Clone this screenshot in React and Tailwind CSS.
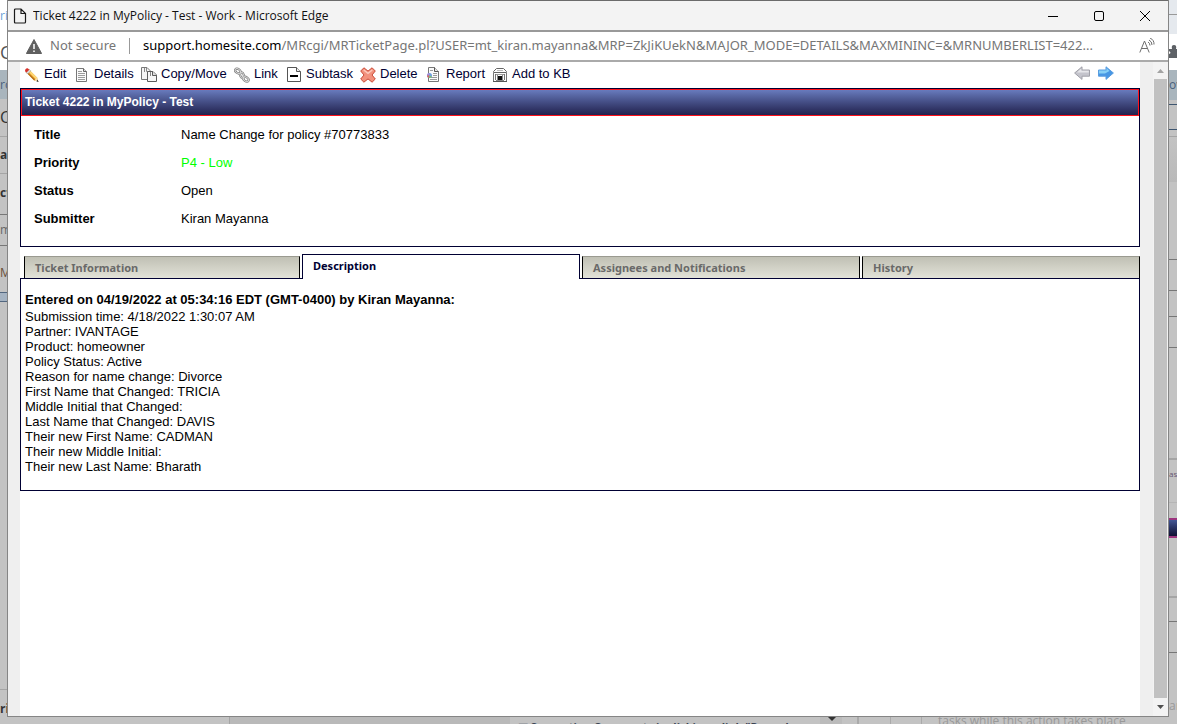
import { useState } from "react";

function PencilIcon() {
  return (
    <svg viewBox="0 0 16 16" className="size-4 shrink-0" aria-hidden="true">
      <path d="M4.5 2 13 10.5 14.3 14.6 10.2 13.4 1.8 5z" fill="#e8a332" />
      <path d="M5.6 3.2 13.2 10.8 12 12.2 4.2 4.6z" fill="#ffd978" />
      <path d="M2.6 5.8 10.2 13.4 11 12.6 3.4 5z" fill="#b26a17" />
      <path d="M3.8 3.8 5.3 2.3 6.8 3.8 3.6 7 2.1 5.5z" fill="#ddd" stroke="#888" strokeWidth=".4" />
      <path d="M1.2 4.4C.4 3 2.6.6 4 1.6l1.2 1.1-2.8 2.9z" fill="#d8322c" />
      <path d="M13 10.5 14.3 14.6 10.2 13.4z" fill="#f5dcae" />
      <path d="M13.6 12.8 14.6 14.9 12.4 14.2z" fill="#222" />
    </svg>
  );
}

function DetailsIcon() {
  return (
    <svg viewBox="0 0 16 16" className="size-4 shrink-0" aria-hidden="true">
      <path d="M2.5 1.5H9.5L12.5 4.5V14.5H2.5z" fill="#fafafa" stroke="#777" />
      <path d="M9.5 1.5V4.5H12.5" fill="#ddd" stroke="#666" />
      <path d="M4 4.5H8M4 6.5H11M4 8.5H11M4 10.5H11M4 12.5H11" stroke="#9c9c9c" />
    </svg>
  );
}

function CopyIcon() {
  return (
    <svg viewBox="0 0 16 16" className="size-4 shrink-0" aria-hidden="true">
      <path d="M.5.5H6L9.5 4V12.5H.5z" fill="#f4f4f4" stroke="#777" />
      <path d="M5.5.5V4.5H9.5M3.5 1V5" fill="none" stroke="#888" />
      <path d="M6.5 4.5H12L15.5 8V14.5H6.5z" fill="#f6f6f6" stroke="#5c5c5c" />
      <path d="M11.5 4.5V8.5H15.5" fill="#ddd" stroke="#5c5c5c" />
      <path d="M9.5 5V9" stroke="#888" />
    </svg>
  );
}

function LinkIcon() {
  return (
    <svg viewBox="0 0 16 16" className="size-4 shrink-0" fill="none" aria-hidden="true">
      <g stroke="#777" strokeWidth="2.2">
        <ellipse cx="3.8" cy="4" rx="2.9" ry="2" transform="rotate(35 3.8 4)" />
        <ellipse cx="8" cy="8.2" rx="2.9" ry="1.8" transform="rotate(70 8 8.2)" />
        <ellipse cx="12" cy="12.2" rx="2.9" ry="2" transform="rotate(35 12 12.2)" />
      </g>
      <g stroke="#d8d8d8">
        <ellipse cx="3.8" cy="4" rx="2.9" ry="2" transform="rotate(35 3.8 4)" />
        <ellipse cx="8" cy="8.2" rx="2.9" ry="1.8" transform="rotate(70 8 8.2)" />
        <ellipse cx="12" cy="12.2" rx="2.9" ry="2" transform="rotate(35 12 12.2)" />
      </g>
    </svg>
  );
}

function SubtaskIcon() {
  return (
    <svg viewBox="0 0 16 16" className="size-4 shrink-0" aria-hidden="true">
      <path d="M1.5.5H10.5L14.5 4.5V14.5H1.5z" fill="#fff" stroke="#555" />
      <path d="M10.5.5V4.5H14.5" fill="#eee" stroke="#555" />
      <path d="M4 9H12" stroke="#000" strokeWidth="2" />
    </svg>
  );
}

function DeleteIcon() {
  return (
    <svg viewBox="0 0 16 16" className="size-4 shrink-0" aria-hidden="true">
      <path
        d="M3.9.8 8 4.100 12.100.8 15.300 4 12 8 15.300 12 12.100 15.200 8 11.900 3.900 15.200.7 12 4 8 .7 4z"
        fill="#f2917d"
        stroke="#c94a37"
        strokeLinejoin="round"
      />
      <path d="M3.7 3 8 6.4 12.3 3" fill="none" stroke="#fcc9bd" strokeWidth="1.5" />
    </svg>
  );
}

function ReportIcon() {
  return (
    <svg viewBox="0 0 16 16" className="size-4 shrink-0" aria-hidden="true">
      <path d="M2.5.5H8.5L12.5 4.5V14.5H2.5z" fill="#fafafa" stroke="#777" />
      <path d="M8.5.5V4.5H12.5" fill="#e4e4e4" stroke="#555" />
      <path d="M4 3.5H7M7 6.5H11M7 8.5H11M5 10.5H11M4 12.5H11" stroke="#999" />
      <circle cx="3.5" cy="8.5" r="2.5" fill="#6f9fe0" />
      <path d="M3.5 8.5V6A2.5 2.5 0 0 0 1 8.5z" fill="#a98ad8" />
      <path d="M3.5 8.5H1A2.5 2.5 0 0 0 2.8 10.9z" fill="#e0655c" />
      <path d="M3.5 8.5 2.8 10.9A2.5 2.5 0 0 0 5.8 9.5z" fill="#7cc06c" />
    </svg>
  );
}

function KbIcon() {
  return (
    <svg viewBox="0 0 16 16" className="size-4 shrink-0" aria-hidden="true">
      <path d="M1.5 4.5 4.5 1.5H11.5L14.5 4.5V5.5H1.5z" fill="#fff" stroke="#666" />
      <path d="M5 3.5H11" stroke="#bbb" />
      <path d="M1.5 6V14M3.5 7V13M12.5 7V13M14.5 6V14" stroke="#777" />
      <path d="M4 7.5H12" stroke="#999" />
      <path d="M6 9H10V13H6z" fill="#111" />
      <path d="M5.500 8V13M10.500 8V13M4 13.5H12" stroke="#888" />
      <path d="M1 14.5H15" stroke="#555" />
    </svg>
  );
}

function ArrowIcon({ forward }) {
  return forward ? (
    <svg viewBox="0 0 16 14" className="h-[14px] w-4" aria-hidden="true">
      <path d="M.5 4H8V.8L15.4 7 8 13.4V10.2H.5z" fill="#4796e4" stroke="#5a9de0" strokeLinejoin="round" />
      <path d="M1 4.5H8.5V2L11.5 5 7 7.5H1z" fill="#86cff6" />
    </svg>
  ) : (
    <svg viewBox="0 0 16 14" className="h-[14px] w-4" aria-hidden="true">
      <path d="M15.5 4H8V.8L.6 7 8 13.4V10.2H15.5z" fill="#c4c4cc" stroke="#a0a0a8" strokeLinejoin="round" />
      <path d="M14.8 4.8H7.3V2.6L3 6.6H14.8z" fill="#e6e6ea" />
    </svg>
  );
}

const actions = [
  { label: "Edit", Icon: PencilIcon, width: "w-[50px]" },
  { label: "Details", Icon: DetailsIcon, width: "w-[67px]" },
  { label: "Copy/Move", Icon: CopyIcon, width: "w-[93px]" },
  { label: "Link", Icon: LinkIcon, width: "w-[52px]" },
  { label: "Subtask", Icon: SubtaskIcon, width: "w-[74px]" },
  { label: "Delete", Icon: DeleteIcon, width: "w-[66px]" },
  { label: "Report", Icon: ReportIcon, width: "w-[66px]" },
  { label: "Add to KB", Icon: KbIcon, width: "w-[90px]" },
];

const fields = [
  ["Title", "Name Change for policy #70773833", "text-black"],
  ["Priority", "P4 - Low", "text-[#00ff00]"],
  ["Status", "Open", "text-black"],
  ["Submitter", "Kiran Mayanna", "text-black"],
];

const tabs = ["Ticket Information", "Description", "Assignees and Notifications", "History"];

const lines = [
  "Submission time: 4/18/2022 1:30:07 AM",
  "Partner: IVANTAGE",
  "Product: homeowner",
  "Policy Status: Active",
  "Reason for name change: Divorce",
  "First Name that Changed: TRICIA",
  "Middle Initial that Changed:",
  "Last Name that Changed: DAVIS",
  "Their new First Name: CADMAN",
  "Their new Middle Initial:",
  "Their new Last Name: Bharath",
];

function TitleBar() {
  return (
    <header className="flex h-[32px] items-center border-t border-b-2 border-t-[#6b6b6b] border-b-[#999] bg-[#f3f3f3] pl-1">
      <svg viewBox="0 0 16 16" className="size-4" fill="none" stroke="#1a1a1a" strokeWidth="1.2" aria-hidden="true">
        <path d="M3.5 1H9L13.5 5.5V14Q13.5 15 12.5 15H3.5Q2.5 15 2.5 14V2Q2.5 1 3.5 1zM9 1V5.5H13.5" />
      </svg>
      <h1 className="ml-[5px] flex-1 truncate font-['Open_Sans',sans-serif] text-[12px] text-[#111]">
        Ticket 4222 in MyPolicy - Test - Work - Microsoft Edge
      </h1>
      <div className="flex">
        <button aria-label="Minimize" className="flex h-7 w-[46px] items-center justify-center">
          <svg viewBox="0 0 10 10" className="size-[10px]" stroke="#000" aria-hidden="true"><path d="M0 5.5H10" /></svg>
        </button>
        <button aria-label="Maximize" className="flex h-7 w-[46px] items-center justify-center">
          <svg viewBox="0 0 10 10" className="size-[10px]" fill="none" stroke="#000" aria-hidden="true"><rect x=".5" y=".5" width="9" height="9" rx="1.5" /></svg>
        </button>
        <button aria-label="Close" className="flex h-7 w-[46px] items-center justify-center">
          <svg viewBox="0 0 10 10" className="size-[10px]" stroke="#000" aria-hidden="true"><path d="M0 0 10 10M10 0 0 10" /></svg>
        </button>
      </div>
    </header>
  );
}

function AddressBar() {
  return (
    <div className="flex h-[30px] items-center border-b-2 border-[#aaa] bg-white pl-[18px] font-['Noto_Sans',sans-serif] text-[13px] text-[#767676]">
      <svg viewBox="0 0 16 15" className="h-[15px] w-4 shrink-0" aria-hidden="true">
        <path d="M8 .5 15.6 14.5H.4z" fill="#5f5f5f" stroke="#5f5f5f" strokeLinejoin="round" />
        <path d="M8 5V10M8 11.5V13" stroke="#fff" strokeWidth="1.5" />
      </svg>
      <span className="ml-2 shrink-0">Not secure</span>
      <span className="mx-[13px] h-4 w-px shrink-0 bg-[#999]" />
      <span className="min-w-0 flex-1 truncate">
        <span className="text-black">support.homesite.com</span>
        /MRcgi/MRTicketPage.pl?USER=mt_kiran.mayanna&amp;MRP=ZkJiKUekN&amp;MAJOR_MODE=DETAILS&amp;MAXMININC=&amp;MRNUMBERLIST=422...
      </span>
      <button aria-label="Read aloud" className="mr-[13px] shrink-0">
        <svg viewBox="0 0 16 16" className="size-4" fill="none" stroke="#6e6e6e" aria-hidden="true">
          <path d="M.8 14.5 5.5 3 10.2 14.5M2.5 10.5H8.5M9 4Q11 5 11 7.5M10 2Q13 3.5 13 7M11 0Q15.3 2 15 6.5" />
        </svg>
      </button>
    </div>
  );
}

function Ticket() {
  const [active, setActive] = useState("Description");
  return (
    <main className="flex-1 bg-white font-['Liberation_Sans',Arial,sans-serif] text-[13px] leading-[15px] text-black">
      <nav className="flex h-[26px] items-center pl-1">
        {actions.map(({ label, Icon, width }) => (
          <a key={label} href="#" className={`${width} flex items-center gap-1 whitespace-nowrap text-[#000033]`}>
            <Icon />
            <span className="pb-1">{label}</span>
          </a>
        ))}
        <div className="ml-auto flex gap-2 pr-[26px] pb-1">
          <button aria-label="Previous ticket"><ArrowIcon /></button>
          <button aria-label="Next ticket"><ArrowIcon forward /></button>
        </div>
      </nav>
      <section className="border border-[#000033]">
        <h2 className="flex h-[27px] items-center border border-[#ff1018] bg-linear-to-b from-[#687bbd] to-[#22224e] pl-[3px] text-[12px] font-bold text-white">
          Ticket 4222 in MyPolicy - Test
        </h2>
        <dl className="pt-1 pb-[14px] pl-[13px]">
          {fields.map(([name, value, color]) => (
            <div key={name} className="flex h-7 items-center">
              <dt className="w-[147px] font-bold">{name}</dt>
              <dd className={color}>{value}</dd>
            </div>
          ))}
        </dl>
      </section>
      <div role="tablist" className="mt-[7px] -mb-px grid grid-cols-[276fr_278fr_278fr_278fr] items-end gap-x-[2px] pl-1 font-['Noto_Sans',sans-serif] text-[11px] font-bold">
        {tabs.map((tab) => (
          <button
            key={tab}
            role="tab"
            aria-selected={active === tab}
            onClick={() => setActive(tab)}
            className={
              active === tab
                ? "flex h-[25px] items-center border border-b-0 border-[#000033] bg-white pb-[3px] pl-[10px] text-[#000033]"
                : "mb-px flex h-[22px] items-center border-x border-t border-x-black border-t-[#9a9a90] bg-linear-to-b from-[#c0c0b4] to-[#e2e2d8] pl-[10px] text-[#696969]"
            }
          >
            {tab}
          </button>
        ))}
      </div>
      <section role="tabpanel" className="border border-[#000033] px-1 pt-[13px] pb-4">
        <h3 className="mb-[2px] font-bold">Entered on 04/19/2022 at 05:34:16 EDT (GMT-0400) by Kiran Mayanna:</h3>
        {lines.map((line) => (
          <p key={line}>{line}</p>
        ))}
      </section>
    </main>
  );
}

function Scrollbar() {
  return (
    <div className="flex w-[15px] flex-col items-center bg-[#f3f3f3]">
      <button aria-label="Scroll up" className="flex h-[17px] w-full items-center justify-center">
        <svg viewBox="0 0 7 4" className="h-1 w-[7px]" aria-hidden="true"><path d="M3.5 0 7 4H0z" fill="#a3a3a3" /></svg>
      </button>
      <div className="w-[13px] flex-1 bg-[#c1c1c1]" />
      <button aria-label="Scroll down" className="flex h-[18px] w-full items-center justify-center">
        <svg viewBox="0 0 7 4" className="h-1 w-[7px]" aria-hidden="true"><path d="M0 0H7L3.5 4z" fill="#505050" /></svg>
      </button>
    </div>
  );
}

const strip = "flex shrink-0 flex-col overflow-hidden bg-[#c3c3c3] font-['Open_Sans',sans-serif] text-[12px] leading-4 text-[#333] [&>*]:shrink-0";

function LeftStrip() {
  return (
    <aside aria-hidden="true" className={`${strip} w-2 border-r border-[#858585]`}>
      <div className="h-9 bg-white pt-2 text-[#6a9fd8]">ri</div>
      <div className="h-[34px] bg-white pt-2 text-[18px] text-[#555]">C</div>
      <div className="h-[29px] bg-[#a9b5bd] pt-[7px] text-[#48607c]">ro</div>
      <div className="h-[38px] border-b border-[#a5a5a5] pt-[10px] text-[16px]">C</div>
      <div className="h-[37px] border-b border-[#a5a5a5] pt-[10px] font-bold">ar</div>
      <div className="h-[41px] border-b border-[#777] pt-[11px] font-bold">ct</div>
      <div className="h-[31px] border-b border-[#777] pt-[7px] text-[#666]">m</div>
      <div className="h-[46px] pt-[19px] text-[#6b513a]">M</div>
      <div className="h-[10px] border-y border-[#526780] bg-[#a5b3c2]" />
      <div className="h-[388px] border-b border-[#a5a5a5]" />
      <div className="h-7 pt-[11px] font-bold">rig</div>
    </aside>
  );
}

function RightStrip() {
  return (
    <aside aria-hidden="true" className={`${strip} w-[9px] border-l border-[#858585]`}>
      <div className="h-[15px] border-b border-[#999] bg-[#e5e9ee]" />
      <div className="h-[19px] bg-[#e5e9ee]" />
      <div className="h-9 bg-white pt-[11px]">
        <svg viewBox="0 0 8 13" className="h-[13px] w-2"><path d="M0 4H3Q2 0 5 0T7 4H8V13H0V9Q3 8 0 6z" fill="#5d6166" /></svg>
      </div>
      <div className="h-[30px] bg-[#a9b5bd] pt-[7px] text-[#48607c]">ow</div>
      <div className="h-[5px] border-b border-[#3e5670]" />
      <div className="h-[25px] border-b border-[#3e5670]" />
      <div className="h-[7px] border-b border-[#a5a5a5]" />
      <div className="h-[45px] bg-linear-to-b from-[#c3c3c3] to-[#b9b9b9]" />
      <div className="h-[78px] border-b border-[#777]" />
      <div className="h-[31px] border-b border-[#777]" />
      <div className="h-[26px] border-b border-[#777]" />
      <div className="h-[31px] border-b border-[#777]" />
      <div className="h-28 border-b-2 border-[#a5a5a5]" />
      <div className="h-[43px] border-b border-[#b5b5b5] pt-[6px] text-[8px] text-[#655670]">as</div>
      <div className="mt-[15px] h-5 border-y-2 border-[#9c347e] bg-linear-to-b from-[#445795] to-[#101033]" />
      <div className="h-[60px] border-b-2 border-[#a5a5a5]" />
      <div className="h-6 border-b border-[#777]" />
      <div className="h-[31px] border-b border-[#777]" />
      <div className="pt-[45px] text-[#999]">ar</div>
    </aside>
  );
}

export default function App() {
  return (
    <div className="flex h-screen flex-col overflow-hidden bg-[#c3c3c3]">
      <div className="flex min-h-0 flex-1">
        <LeftStrip />
        <div className="flex min-w-0 flex-1 flex-col border-b border-[#858585]">
          <TitleBar />
          <AddressBar />
          <div className="flex flex-1 bg-[#efefef] pl-3">
            <Ticket />
            <div className="w-[13px]" />
            <Scrollbar />
          </div>
        </div>
        <RightStrip />
      </div>
      <footer aria-hidden="true" className="flex h-[7px] shrink-0 overflow-hidden font-['Open_Sans',sans-serif] text-[12px] leading-4 whitespace-nowrap">
        <div className="w-[230px] border-r border-[#a5a5a5]" />
        <div className="w-[280px] bg-[#b9b9b9]" />
        <div className="w-[310px] pt-[2px] pl-2 text-[11px] font-bold text-[#3a4453]">▣ Separation Comments is clicking a link &quot;Record</div>
        <div className="w-[22px] bg-[#bbb] pl-2">
          <svg viewBox="0 0 8 4" className="h-1 w-2"><path d="M0 0H8L4 4z" fill="#333" /></svg>
        </div>
        <div className="w-[16px] border-r border-[#aaa]" />
        <div className="w-[33px] border-x border-[#aaa]" />
        <div className="w-[31px] border-r border-[#aaa]" />
        <div className="-mt-1 pl-4 text-[#999]">tasks while this action takes place</div>
      </footer>
    </div>
  );
}
